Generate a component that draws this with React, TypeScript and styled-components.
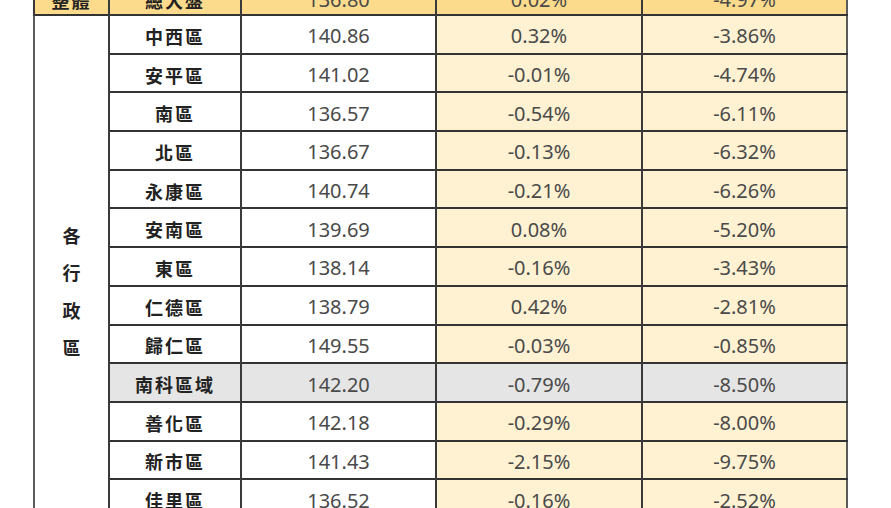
import React from "react";
import styled, { createGlobalStyle } from "styled-components";

const GlobalStyle = createGlobalStyle`
  html, body {
    margin: 0;
    padding: 0;
    background: #ffffff;
    overflow: hidden;
  }
`;

const Page = styled.div`
  width: 891px;
  height: 508px;
  overflow: hidden;
  padding-left: 33px;
  box-sizing: border-box;
`;

const Table = styled.table`
  margin-top: -18px;
  width: 813px;
  table-layout: fixed;
  border-collapse: collapse;
  border-left: 2px solid #5a5a5a;
  border-right: 2px solid #5a5a5a;
`;

const Row = styled.tr<{ $head?: boolean; $gray?: boolean }>`
  height: ${(p) => (p.$head ? "33px" : "38.7px")};
  border-bottom: 2px solid #333333;
  background: ${(p) => (p.$head ? "#fddb8c" : p.$gray ? "#e5e5e5" : "transparent")};
`;

const Cell = styled.td<{ $pct?: boolean; $gray?: boolean; $head?: boolean }>`
  padding: 3px 0 0;
  text-align: center;
  vertical-align: middle;
  border-left: 2px solid #3a3a3a;
  font-family: "Noto Sans", "Liberation Sans", sans-serif;
  font-size: 20px;
  color: #4a4a4a;
  background: ${(p) =>
    p.$head ? "#fddb8c" : p.$gray ? "#e5e5e5" : p.$pct ? "#fff2d3" : "#ffffff"};
`;

const NameCell = styled(Cell)`
  font-family: "Noto Sans CJK TC", "Noto Sans", sans-serif;
  font-weight: 700;
  font-size: 18px;
  letter-spacing: 2px;
  color: #222222;
`;

const GroupCell = styled.td`
  padding: 0;
  background: #ffffff;
  text-align: center;
  vertical-align: middle;
`;

const VerticalLabel = styled.span`
  display: inline-block;
  width: 1em;
  padding-top: 12px;
  font-family: "Noto Sans CJK TC", "Noto Sans", sans-serif;
  font-weight: 700;
  font-size: 18px;
  line-height: 37.5px;
  color: #222222;
  word-break: break-all;
`;

type District = {
  name: string;
  index: string;
  month: string;
  year: string;
  gray?: boolean;
};

const districts: District[] = [
  { name: "中西區", index: "140.86", month: "0.32%", year: "-3.86%" },
  { name: "安平區", index: "141.02", month: "-0.01%", year: "-4.74%" },
  { name: "南區", index: "136.57", month: "-0.54%", year: "-6.11%" },
  { name: "北區", index: "136.67", month: "-0.13%", year: "-6.32%" },
  { name: "永康區", index: "140.74", month: "-0.21%", year: "-6.26%" },
  { name: "安南區", index: "139.69", month: "0.08%", year: "-5.20%" },
  { name: "東區", index: "138.14", month: "-0.16%", year: "-3.43%" },
  { name: "仁德區", index: "138.79", month: "0.42%", year: "-2.81%" },
  { name: "歸仁區", index: "149.55", month: "-0.03%", year: "-0.85%" },
  { name: "南科區域", index: "142.20", month: "-0.79%", year: "-8.50%", gray: true },
  { name: "善化區", index: "142.18", month: "-0.29%", year: "-8.00%" },
  { name: "新市區", index: "141.43", month: "-2.15%", year: "-9.75%" },
  { name: "佳里區", index: "136.52", month: "-0.16%", year: "-2.52%" },
  { name: "新營區", index: "135.47", month: "0.11%", year: "-3.02%" },
];

export default function App() {
  return (
    <Page>
      <GlobalStyle />
      <Table>
        <colgroup>
          <col style={{ width: 75 }} />
          <col style={{ width: 132 }} />
          <col style={{ width: 195 }} />
          <col style={{ width: 206 }} />
          <col style={{ width: 205 }} />
        </colgroup>
        <tbody>
          <Row $head>
            <NameCell $head>整體</NameCell>
            <NameCell $head>總大盤</NameCell>
            <Cell $head>136.80</Cell>
            <Cell $head>0.02%</Cell>
            <Cell $head>-4.97%</Cell>
          </Row>
          {districts.map((d, i) => (
            <Row key={d.name} $gray={d.gray}>
              {i === 0 && (
                <GroupCell rowSpan={districts.length}>
                  <VerticalLabel>各行政區</VerticalLabel>
                </GroupCell>
              )}
              <NameCell $gray={d.gray}>{d.name}</NameCell>
              <Cell $gray={d.gray}>{d.index}</Cell>
              <Cell $pct $gray={d.gray}>{d.month}</Cell>
              <Cell $pct $gray={d.gray}>{d.year}</Cell>
            </Row>
          ))}
        </tbody>
      </Table>
    </Page>
  );
}
